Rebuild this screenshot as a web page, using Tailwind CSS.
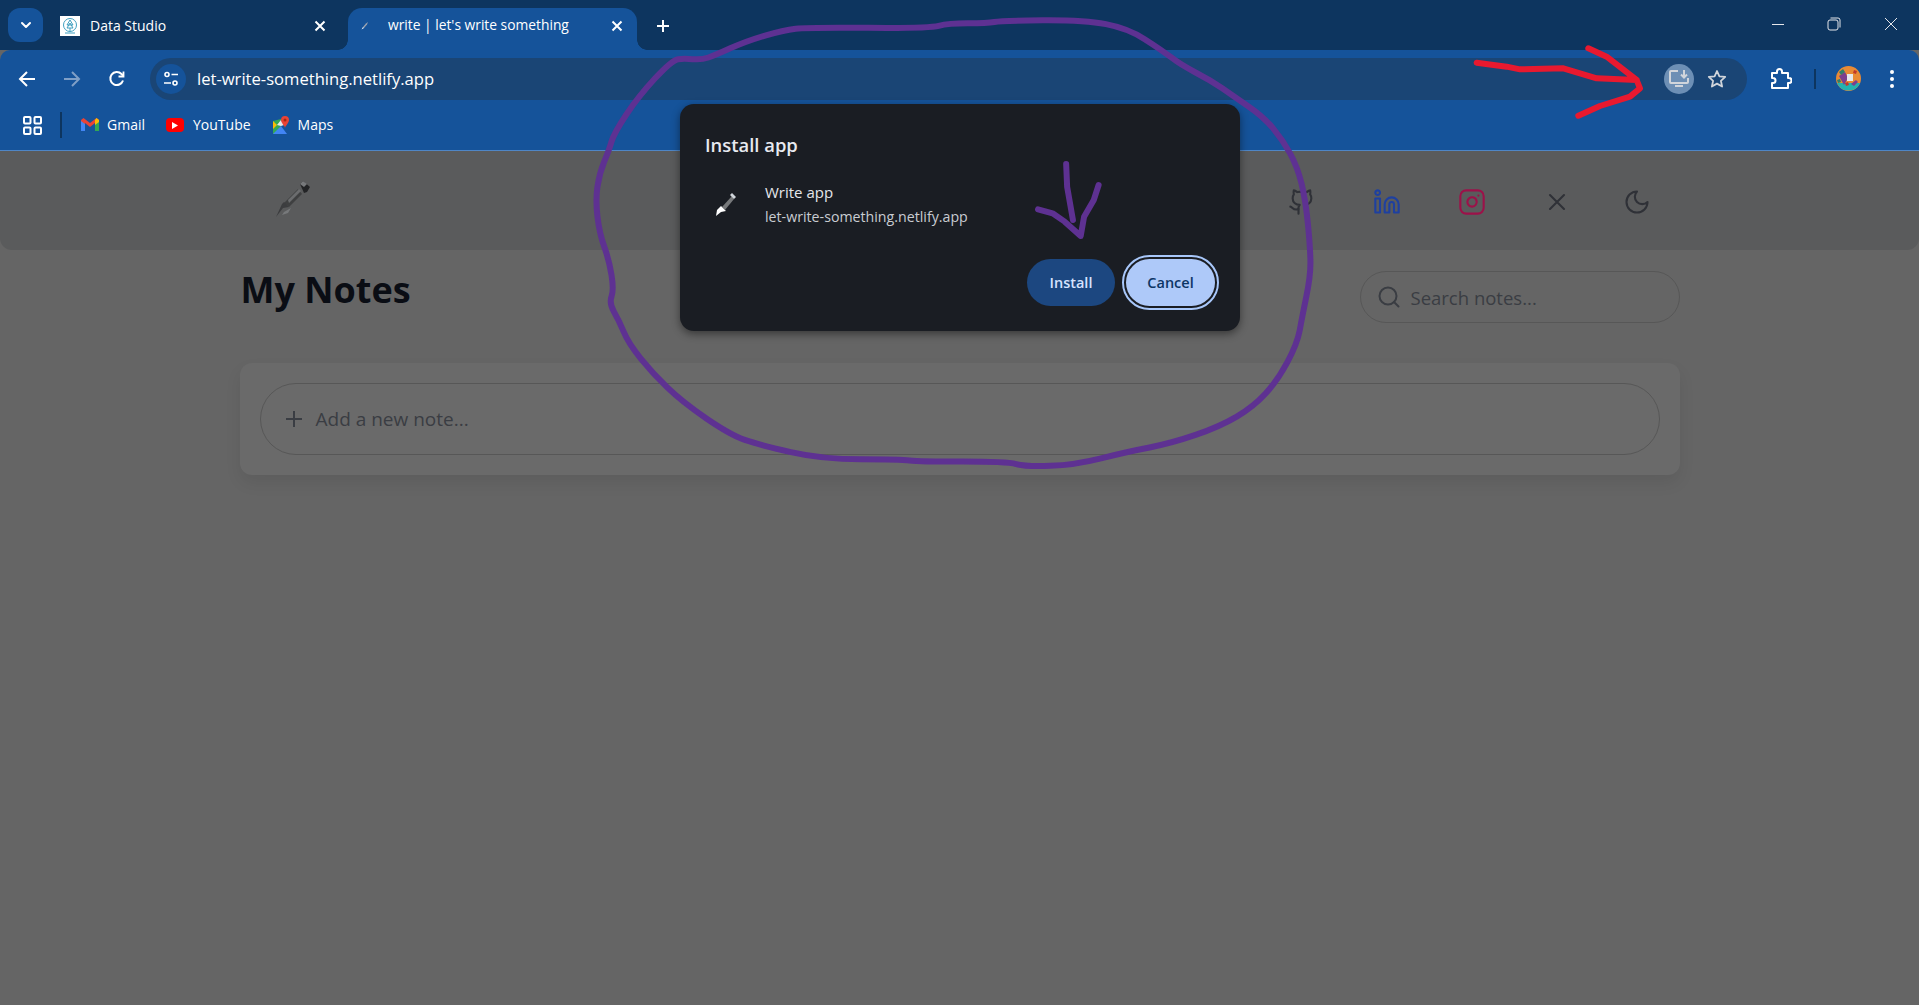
<!DOCTYPE html>
<html lang="en">
<head>
    <meta charset="UTF-8">
    <title>write | let's write something</title>
    <script src="https://cdn.jsdelivr.net/npm/@tailwindcss/browser@4"></script>
</head>
<body class="relative h-[1005px] w-[1919px] overflow-hidden bg-[#656565] font-['Open_Sans',sans-serif]">

    <!-- tab strip -->
    <div class="flex h-[50px] items-start bg-[#0d355f] pt-2 text-white">
        <div class="ml-2 flex h-[34px] w-[35px] items-center justify-center rounded-xl bg-[#15539a]">
            <svg width="16" height="16" viewBox="0 0 16 16" fill="none" stroke="white" stroke-width="2" stroke-linecap="round" stroke-linejoin="round"><path d="M4 6l4 4 4-4"/></svg>
        </div>
        <div class="ml-[17px] flex h-9 w-[288px] items-center">
            <div class="flex h-5 w-5 items-center justify-center bg-white">
                <svg width="18" height="18" viewBox="0 0 18 18" fill="none" stroke="#3f9fc0" stroke-width="1"><circle cx="9" cy="8" r="6.500"/><path d="M9 3l3 5H6zM9 6l3 5H6zM9 11v3M4 16h10"/></svg>
            </div>
            <span class="ml-[10px] -mt-px text-[14px]">Data Studio</span>
            <svg class="ml-auto mr-[21px]" width="14" height="14" viewBox="0 0 14 14" stroke="white" stroke-width="2"><path d="M2.500 2.500l9 9M11.500 2.500l-9 9"/></svg>
        </div>
        <div class="relative flex h-[42px] w-[289px] items-center rounded-t-[14px] bg-[#15539a] pb-[6px]">
            <span class="absolute bottom-0 left-[-10px] h-[10px] w-[10px] bg-[radial-gradient(circle_at_0_0,#0d355f_9.5px,#15539a_10px)]"></span>
            <span class="absolute bottom-0 right-[-10px] h-[10px] w-[10px] bg-[radial-gradient(circle_at_100%_0,#0d355f_9.5px,#15539a_10px)]"></span>
            <svg class="ml-[12px]" width="10" height="10" viewBox="0 0 10 10"><path d="M8 1L6 2.500 3 6l1 1 3-3.500z" fill="#9ca3af"/><path d="M3 6L1.500 8.500 4 7z" fill="#ffffff"/></svg>
            <span class="ml-[18px] -mt-px text-[13.8px]">write | let's write something</span>
            <svg class="ml-auto mr-[13px]" width="14" height="14" viewBox="0 0 14 14" stroke="white" stroke-width="2"><path d="M2.500 2.500l9 9M11.500 2.500l-9 9"/></svg>
        </div>
        <svg class="ml-[18px] mt-[10px]" width="16" height="16" viewBox="0 0 16 16" stroke="white" stroke-width="2"><path d="M8 2v12M2 8h12"/></svg>
        <div class="ml-auto mt-[9px] flex items-center">
            <svg width="14" height="14" viewBox="0 0 14 14" stroke="#e5e7eb" stroke-width="1"><path d="M1 7.500h12"/></svg>
            <svg class="ml-[42px]" width="14" height="14" viewBox="0 0 14 14" fill="none" stroke="#e5e7eb" stroke-width="1"><rect x="1" y="3" width="10" height="10" rx="2"/><path d="M3.500 1h7.500a2 2 0 0 1 2 2v7.500"/></svg>
            <svg class="ml-[43px] mr-[21px]" width="14" height="14" viewBox="0 0 14 14" stroke="#e5e7eb" stroke-width="1"><path d="M1 1l12 12M13 1L1 13"/></svg>
        </div>
    </div>

    <!-- toolbar -->
    <div class="h-[101px] rounded-t-[10px] border-b border-[#4f86c6] bg-[#15539a] text-white">
        <div class="flex h-[58px] items-center">
            <svg class="ml-[18px]" width="18" height="18" viewBox="0 0 18 18" fill="none" stroke="white" stroke-width="2"><path d="M17 9H2M9 2L2 9l7 7"/></svg>
            <svg class="ml-[27px]" width="18" height="18" viewBox="0 0 18 18" fill="none" stroke="#7f9fc6" stroke-width="2"><path d="M1 9h15M9 2l7 7-7 7"/></svg>
            <svg class="ml-[27px]" width="18" height="18" viewBox="0 0 18 18" fill="none" stroke="white" stroke-width="2"><path d="M15 10.500A6.500 6.500 0 1 1 13.500 4L15.500 6"/><path d="M15.500 1.500V6.500H10.500" stroke-width="1.800"/></svg>
            <div class="ml-[24px] flex h-[42px] w-[1597px] items-center rounded-full bg-[#1a4575]">
                <div class="ml-[6px] flex h-[30px] w-[30px] items-center justify-center rounded-full bg-[#15539a]">
                    <svg width="16" height="16" viewBox="0 0 16 16" fill="none" stroke="white" stroke-width="1.600"><circle cx="4" cy="3.500" r="2"/><path d="M8.500 3.500H15M1 12h7"/><circle cx="12" cy="12" r="2"/></svg>
                </div>
                <span class="ml-[11px] text-[16.6px]">let-write-something.netlify.app</span>
                <div class="ml-auto flex h-[30px] w-[30px] items-center justify-center rounded-full bg-[#6d8fb5]">
                    <svg width="22" height="20" viewBox="0 0 22 20" fill="none" stroke="#d1d5db" stroke-width="2"><path d="M10 2H3a1 1 0 0 0-1 1v10a1 1 0 0 0 1 1h16a1 1 0 0 0 1-1V9"/><path d="M16 1v7M13 5.500L16 8.500 19 5.500M7 17h8"/></svg>
                </div>
                <svg class="ml-[13px] mr-[20px]" width="20" height="20" viewBox="0 0 20 20" fill="none" stroke="#d1d5db" stroke-width="1.800" stroke-linejoin="round"><path d="M10 2l2.400 5.300 5.800.6-4.300 3.900 1.200 5.700L10 14.600l-5.100 2.900 1.200-5.700L1.800 7.900l5.800-.6z"/></svg>
            </div>
            <svg class="ml-[23px]" width="22" height="22" viewBox="0 0 22 22" fill="none" stroke="white" stroke-width="2" stroke-linejoin="round"><path d="M2 5h5V3.500a2.500 2.500 0 0 1 5 0V5h6v5h1a2.500 2.500 0 0 1 0 5h-1v5H2v-5h1a2.500 2.500 0 0 0 0-5H2z"/></svg>
            <div class="ml-[22px] h-[20px] w-[2px] bg-[#0d355f]"></div>
            <svg class="ml-[20px] -mt-px" width="25" height="25" viewBox="0 0 25 25">
                <circle cx="12.500" cy="12.500" r="12.500" fill="#e88a35"/>
                <path d="M1 17h23a12.500 12.500 0 0 1-23 0z" fill="#22b3b0"/>
                <path d="M3 10l6-4 3 6-4 7zM15 18l5-4 2 2-4 4z" fill="#7b3f8f"/>
                <rect x="11" y="8" width="6" height="7" fill="#e5e7eb"/>
                <path d="M3 6l4-3 2 3-4 3zM1 14l3-1 1 3-3 1z" fill="#2f7f6a"/>
                <path d="M18 4l3 1-1 3-3-1zM9 17l3-1 1 3-3 1z" fill="#c0392b"/>
            </svg>
            <svg class="ml-[28px]" width="6" height="20" viewBox="0 0 6 20" fill="white"><circle cx="3" cy="3" r="2"/><circle cx="3" cy="10" r="2"/><circle cx="3" cy="17" r="2"/></svg>
        </div>
        <div class="flex h-[34px] items-center text-[14px]">
            <svg class="ml-[23px]" width="19" height="19" viewBox="0 0 19 19" fill="none" stroke="white" stroke-width="2"><rect x="1" y="1" width="6.500" height="6.500" rx="1"/><rect x="11.500" y="1" width="6.500" height="6.500" rx="1"/><rect x="1" y="11.500" width="6.500" height="6.500" rx="1"/><rect x="11.500" y="11.500" width="6.500" height="6.500" rx="1"/></svg>
            <div class="ml-[18px] h-[26px] w-[2px] bg-[#0d355f]"></div>
            <svg class="ml-[19px]" width="18" height="14" viewBox="0 0 18 14">
                <path d="M0 2v11h4V5l5 4 5-4v8h4V2L15.500 0 9 5 2.500 0z" fill="#ea4335"/>
                <path d="M0 3v10h4V6z" fill="#4285f4"/>
                <path d="M14 6v7h4V3z" fill="#34a853"/>
                <path d="M15.500 0L18 2v2l-4 3V2z" fill="#fbbc04"/>
            </svg>
            <span class="ml-2 -mt-px">Gmail</span>
            <div class="ml-[21px] flex h-[14px] w-[18px] items-center justify-center rounded-[4px] bg-[#ff0000]">
                <svg width="6" height="7" viewBox="0 0 6 7"><path d="M0 0l6 3.500L0 7z" fill="white"/></svg>
            </div>
            <span class="ml-[9px] -mt-px">YouTube</span>
            <svg class="ml-[21px]" width="18" height="19" viewBox="0 0 18 19">
                <path d="M1 5l8-2v15H1z" fill="#34a853"/>
                <path d="M1 18l8-8 6 8z" fill="#4285f4"/>
                <path d="M1 5l4 4-4 4z" fill="#fbbc04"/>
                <path d="M9 10l-4-1 4-5 3 5z" fill="#e5e7eb"/>
                <path d="M13 0a4 4 0 0 1 4 4c0 3-4 6-4 8-0-2-4-5-4-8a4 4 0 0 1 4-4z" fill="#ea4335"/>
                <circle cx="13" cy="4" r="1.500" fill="#a52714"/>
            </svg>
            <span class="ml-[8px] -mt-px">Maps</span>
        </div>
    </div>

    <!-- dimmed app header -->
    <header class="h-[99px] rounded-b-[12px] bg-[#5a5b5c]">
        <div class="mx-auto flex h-full w-[1440px] items-center justify-between pt-[2px]">
            <svg class="ml-[35px] -mt-[6px]" width="36" height="38" viewBox="0 0 36 38">
                <path d="M23 9L9 23l5 4 13-13z" fill="#3f4041"/>
                <path d="M13 20L24 9l2 2-12 12z" fill="#6b6c6e"/>
                <path d="M25 4l3-3 7 6-3 5-3 1z" fill="#232426"/>
                <path d="M28 1l4 3-3 3-4-3z" fill="#77797b"/>
                <path d="M7 24l2-2 5 5-6 1L1 37z" fill="#3c3d3f"/>
                <path d="M9 32l7-4-3 5-6 2z" fill="#77797b"/>
            </svg>
            <div class="mr-[29px] flex items-center text-[#2f3137]">
                <svg width="28" height="28" viewBox="0 0 24 24" fill="none" stroke="currentColor" stroke-width="1.800" stroke-linecap="round" stroke-linejoin="round"><path d="M15 22v-4a4.800 4.800 0 0 0-1-3.500c3 0 6-2 6-5.500.08-1.250-.27-2.480-1-3.500.28-1.150.28-2.350 0-3.500 0 0-1 0-3 1.500-2.640-.5-5.360-.5-8 0C6 2 5 2 5 2c-.3 1.150-.3 2.350 0 3.500A5.400 5.400 0 0 0 4 9c0 3.500 3 5.500 6 5.500-.39.490-.68 1.050-.85 1.650-.17.600-.22 1.230-.15 1.850v4"/><path d="M9 18c-4.510 2-5-2-7-2"/></svg>
                <svg class="ml-[57px] text-[#1e40a0]" width="28" height="28" viewBox="0 0 24 24" fill="none" stroke="currentColor" stroke-width="1.800" stroke-linecap="round" stroke-linejoin="round"><path d="M16 8a6 6 0 0 1 6 6v7h-4v-7a2 2 0 0 0-2-2 2 2 0 0 0-2 2v7h-4v-7a6 6 0 0 1 6-6z"/><rect width="4" height="12" x="2" y="9"/><circle cx="4" cy="4" r="2"/></svg>
                <svg class="ml-[57px] text-[#9d1149]" width="28" height="28" viewBox="0 0 24 24" fill="none" stroke="currentColor" stroke-width="1.800" stroke-linecap="round" stroke-linejoin="round"><rect width="20" height="20" x="2" y="2" rx="5" ry="5"/><path d="M16 11.370A4 4 0 1 1 12.630 8 4 4 0 0 1 16 11.370z"/><line x1="17.500" x2="17.510" y1="6.500" y2="6.500"/></svg>
                <svg class="ml-[57px]" width="28" height="28" viewBox="0 0 24 24" fill="none" stroke="currentColor" stroke-width="1.800" stroke-linecap="round" stroke-linejoin="round"><path d="M18 6 6 18M6 6l12 12"/></svg>
                <svg class="ml-[52px]" width="28" height="28" viewBox="0 0 24 24" fill="none" stroke="currentColor" stroke-width="1.800" stroke-linecap="round" stroke-linejoin="round"><path d="M12 3a6 6 0 0 0 9 9 9 9 0 1 1-9-9z"/></svg>
            </div>
        </div>
    </header>

    <!-- dimmed notes page -->
    <main class="mx-auto w-[1440px]">
        <div class="flex items-start justify-between pt-[21px]">
            <h1 class="ml-px -mt-px text-[36px] font-bold leading-[40px] text-[#0a0d14]">My Notes</h1>
            <div class="flex h-[52px] w-[320px] items-center rounded-full border border-[#575757] pl-4 text-[18.5px] text-[#3a3d43]">
                <svg width="24" height="24" viewBox="0 0 24 24" fill="none" stroke="currentColor" stroke-width="2" stroke-linecap="round"><circle cx="11" cy="11" r="8.500"/><path d="M21.500 21.500l-4.500-4.500"/></svg>
                <span class="ml-[10px] mt-px">Search notes...</span>
            </div>
        </div>
        <div class="mt-[40px] rounded-xl bg-[#6a6a6a] p-5 shadow-[0_8px_16px_rgba(0,0,0,0.08)]">
            <div class="flex h-[72px] items-center rounded-full border border-[#575757] pl-[23px] text-[19px] text-[#3a3d43]">
                <svg width="20" height="20" viewBox="0 0 20 20" fill="none" stroke="currentColor" stroke-width="2"><path d="M10 2v16M2 10h16"/></svg>
                <span class="ml-[12px] mt-px">Add a new note...</span>
            </div>
        </div>
    </main>

    <!-- install dialog -->
    <div class="absolute left-[680px] top-[104px] h-[227px] w-[560px] rounded-[14px] bg-[#1a1d23] text-[#e5e7eb] shadow-[0_3px_8px_rgba(0,0,0,0.45)]">
        <h2 class="pl-[25px] pt-[29px] text-[18.4px] font-semibold leading-6 text-[#e8eaf0]">Install app</h2>
        <div class="mt-[23px] flex items-center pl-[33px]">
            <svg width="24" height="28" viewBox="0 0 24 28"><path d="M19 5L9 16l3 3 9-11z" fill="#77797b"/><path d="M17 4l2-2 4 4-2 2z" fill="#d1d5db"/><path d="M8 15l5 5-5 1-5 4 1-6z" fill="#ffffff"/></svg>
            <div class="ml-[28px]">
                <div class="text-[15px] leading-6">Write app</div>
                <div class="mt-px text-[14.2px] leading-6 text-[#c9ccd2]">let-write-something.netlify.app</div>
            </div>
        </div>
        <div class="absolute bottom-[25px] right-[25px] flex items-center gap-[11px] text-[14.5px] font-semibold">
            <div class="flex h-[47px] w-[88px] items-center justify-center rounded-full bg-[#1c4780] text-[#d6e3ff]">Install</div>
            <div class="flex h-[47px] w-[89px] items-center justify-center rounded-full bg-[#aec9f9] text-[#0d3565] outline-2 outline-offset-2 outline-[#a8c7fa]">Cancel</div>
        </div>
    </div>

    <!-- hand drawn annotations -->
    <svg class="pointer-events-none absolute left-0 top-0" width="1919" height="1005" fill="none" stroke-linecap="round" stroke-linejoin="round">
        <g transform="translate(580 0) scale(.4847 .3333)" stroke="#5e3192">
            <path id="circle" vector-effect="non-scaling-stroke" stroke-width="6" d="M215 175L250 180 280 165 340 125 420 90 470 82 720 85 760 70 840 70 870 62 1040 60 1130 85 1200 150 1240 195 1300 240 1350 290 1410 350 1450 420 1480 500 1497 600 1507 750 1507 830 1490 950 1480 1030 1440 1140 1390 1220 1320 1280 1220 1330 1130 1355 1020 1395 920 1400 880 1385 700 1385 660 1378 500 1378 370 1335 310 1305 210 1205 150 1120 100 1030 80 960 60 910 70 870 60 780 40 700 32 600 40 520 60 450 70 400 120 290 190 180z"/>
            <path vector-effect="non-scaling-stroke" stroke-width="6" d="M1003 492L1005 560 1017 660M1070 555L1060 600 1040 650 1033 708 1000 665 975 640 945 628"/>
        </g>
        <g transform="translate(1440 0) scale(.3333)" stroke="#e8192f" stroke-width="18">
            <path d="M110 188L200 200 240 208 370 205 470 235 590 240 600 265 570 290 480 318 415 347M445 145L500 170 590 240"/>
        </g>
    </svg>

    <script>
        // round off the hand drawn circle: curve through the midpoints of its segments
        const circle = document.getElementById("circle");
        const nums = circle.getAttribute("d").match(/\d+/g).map(Number);
        const pts = [];
        for (let i = 0; i < nums.length; i += 2) pts.push([nums[i], nums[i + 1]]);
        const mid = (a, b) => [(a[0] + b[0]) / 2, (a[1] + b[1]) / 2];
        let d = "M" + mid(pts[pts.length - 1], pts[0]).join(" ");
        pts.forEach((p, i) => {
            const m = mid(p, pts[(i + 1) % pts.length]);
            d += ` Q${p[0]} ${p[1]} ${m[0]} ${m[1]}`;
        });
        circle.setAttribute("d", d + "z");
    </script>
</body>
</html>
